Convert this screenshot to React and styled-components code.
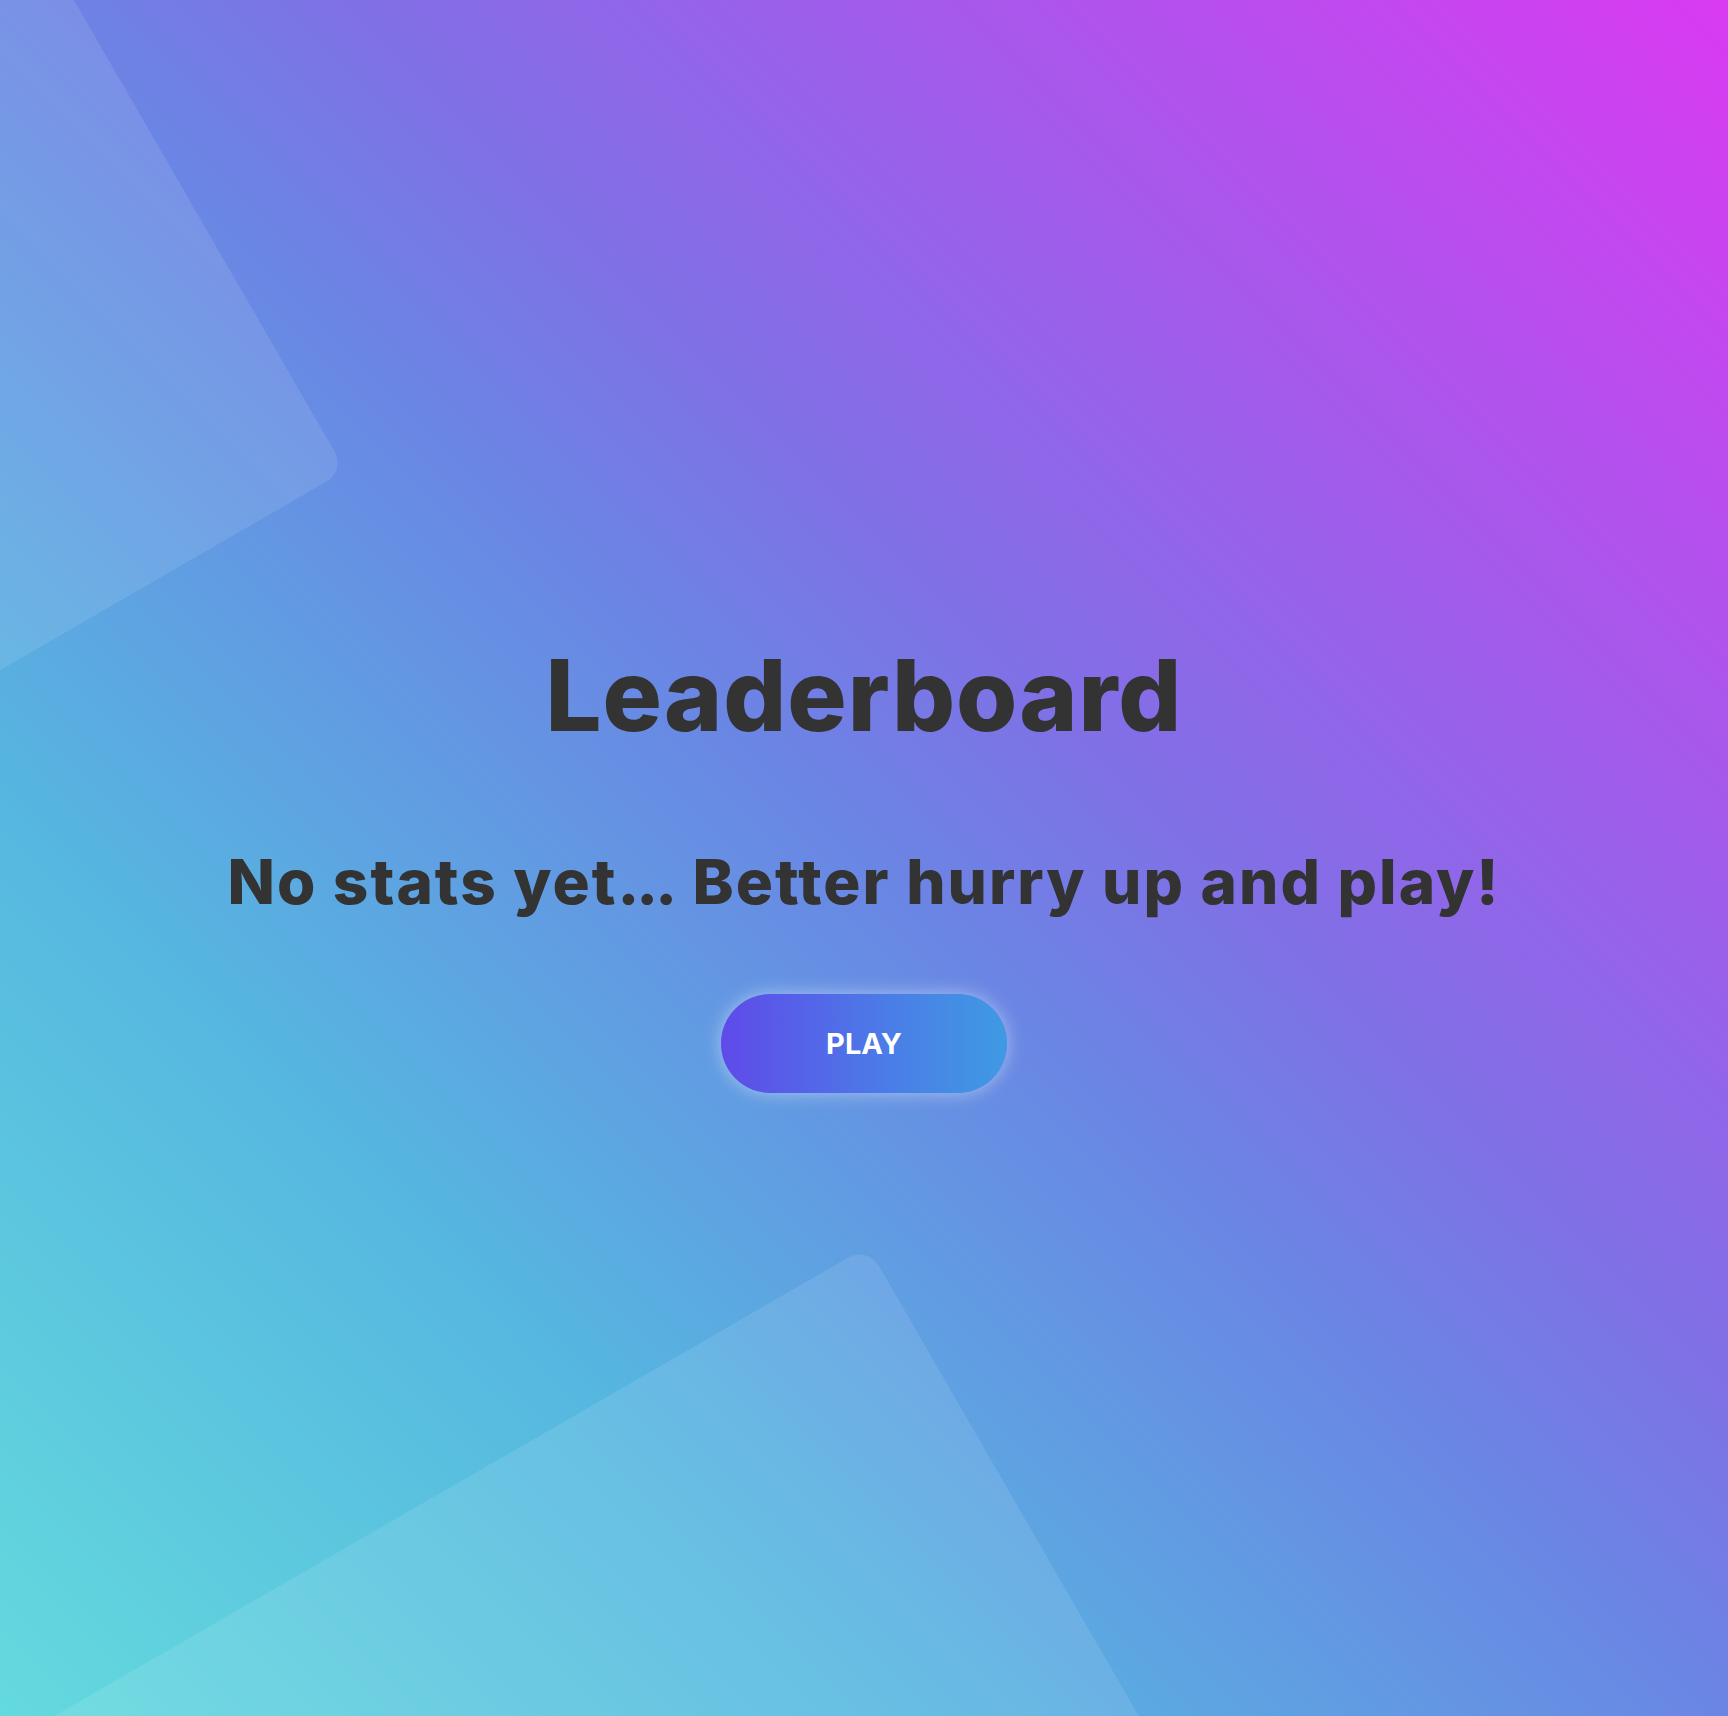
import React from "react";
import styled, { createGlobalStyle } from "styled-components";

const GlobalStyle = createGlobalStyle`
  html, body {
    margin: 0;
    padding: 0;
  }
  body {
    font-family: Inter, "Noto Sans", "Liberation Sans", sans-serif;
    color: #333;
  }
`;

const Page = styled.main`
  position: relative;
  overflow: hidden;
  min-height: 100vh;
  display: flex;
  flex-direction: column;
  align-items: center;
  justify-content: center;
  background: linear-gradient(
    45deg,
    #63dadd 0%,
    #56b6e0 27%,
    #6a86e4 50%,
    #8070e6 60%,
    #d93af2 100%
  );
`;

// rotated translucent squares in the backdrop
const Shape = styled.div`
  position: absolute;
  width: 1200px;
  height: 1200px;
  border-radius: 22px;
  background: rgba(255, 255, 255, 0.1);
  transform: rotate(-30deg);
  left: ${(p) => p.$cx - 600}px;
  top: ${(p) => p.$cy - 600}px;
  pointer-events: none;
`;

const Content = styled.section`
  position: relative;
  display: flex;
  flex-direction: column;
  align-items: center;
  padding-top: 13px;
`;

const Title = styled.h1`
  margin: 0;
  font-size: 99px;
  line-height: 1.2;
  font-weight: 800;
  letter-spacing: 1px;
  color: #333;
`;

const Subtitle = styled.h2`
  margin: 90px 0 0;
  font-size: 62px;
  line-height: 1.2;
  font-weight: 800;
  letter-spacing: 2px;
  color: #333;
`;

const Dots = styled.span`
  letter-spacing: -3px;
  margin-right: 3px;
`;

const PlayButton = styled.button`
  margin-top: 75px;
  width: 286px;
  height: 99px;
  border: none;
  border-radius: 50px;
  background: linear-gradient(90deg, #5f4ae9 0%, #4a7ee7 60%, #3f9ae3 100%);
  box-shadow: 0 0 18px rgba(255, 255, 255, 0.45);
  color: #fff;
  font-family: Inter, "Noto Sans", sans-serif;
  font-size: 29px;
  font-weight: 700;
  cursor: pointer;
`;

export default function App() {
  return (
    <>
      <GlobalStyle />
      <Page>
        <Shape $cx={-474} $cy={251} />
        <Shape $cx={648} $cy={2066} />
        <Content>
          <Title>Leaderboard</Title>
          <Subtitle>
            No stats yet<Dots>...</Dots> Better hurry up and play!
          </Subtitle>
          <PlayButton>PLAY</PlayButton>
        </Content>
      </Page>
    </>
  );
}
